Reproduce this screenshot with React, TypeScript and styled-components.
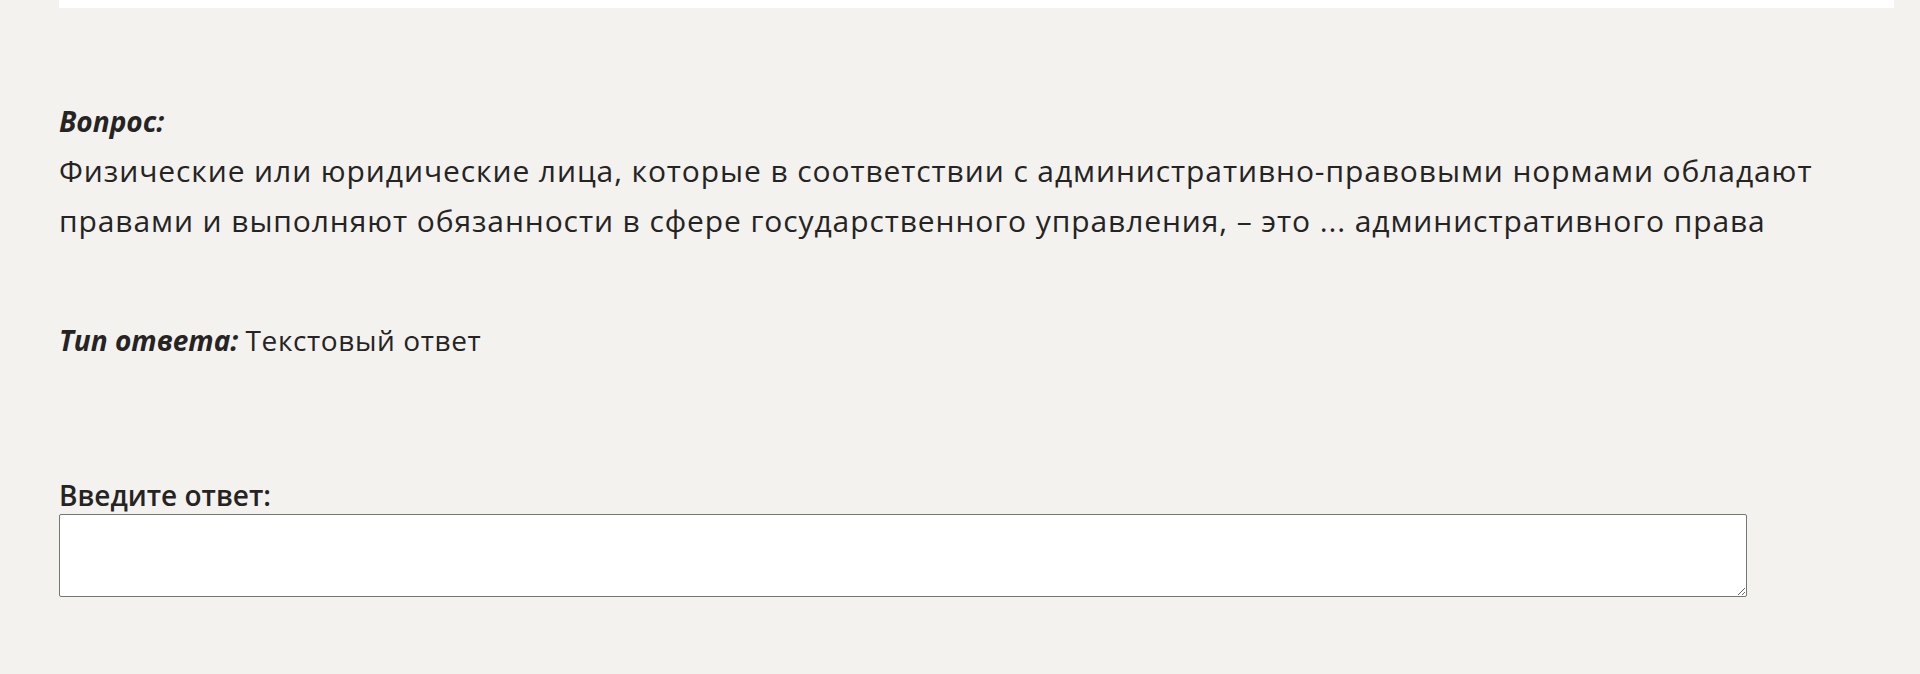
import * as React from 'react'
import styled, { createGlobalStyle } from 'styled-components'

const GlobalStyle = createGlobalStyle`
  html, body {
    margin: 0;
    padding: 0;
    background: #f3f2ef;
  }
  body {
    font-family: 'Open Sans', 'Noto Sans', sans-serif;
    color: #252423;
  }
`

const Page = styled.main`
  padding: 0 26px 40px 59px;
  font-size: 28px;
  line-height: 50px;
`

const CardEdge = styled.div`
  height: 8px;
  background: #ffffff;
`

const Block = styled.section<{ $gap: number }>`
  margin-top: ${(p) => p.$gap}px;
`

const Caption = styled.em`
  font-style: italic;
  font-weight: 700;
`

const QuestionCaption = styled(Caption)`
  display: block;
`

const QuestionText = styled.p`
  margin: 0;
  font-size: 30px;
  letter-spacing: 0.9px;
`

const TypeValue = styled.span`
  letter-spacing: 0.6px;
`

const Label = styled.label`
  display: block;
  font-weight: 600;
  line-height: 36px;
`

const Answer = styled.textarea`
  display: block;
  box-sizing: border-box;
  width: 1688px;
  height: 83px;
  margin-top: 1px;
  background: #ffffff;
  border: 1px solid #767676;
  border-radius: 2px;
  font: inherit;
`

export default function App() {
  return (
    <>
      <GlobalStyle />
      <Page>
        <CardEdge />
        <Block $gap={88}>
          <QuestionCaption>Вопрос:</QuestionCaption>
          <QuestionText>
            Физические или юридические лица, которые в соответствии с административно-правовыми нормами
            обладают правами и выполняют обязанности в сфере государственного управления, – это ...
            административного права
          </QuestionText>
        </Block>
        <Block $gap={69}>
          <Caption>Тип ответа:</Caption> <TypeValue>Текстовый ответ</TypeValue>
        </Block>
        <Block $gap={112}>
          <Label htmlFor="answer">Введите ответ:</Label>
          <Answer id="answer" />
        </Block>
      </Page>
    </>
  )
}
